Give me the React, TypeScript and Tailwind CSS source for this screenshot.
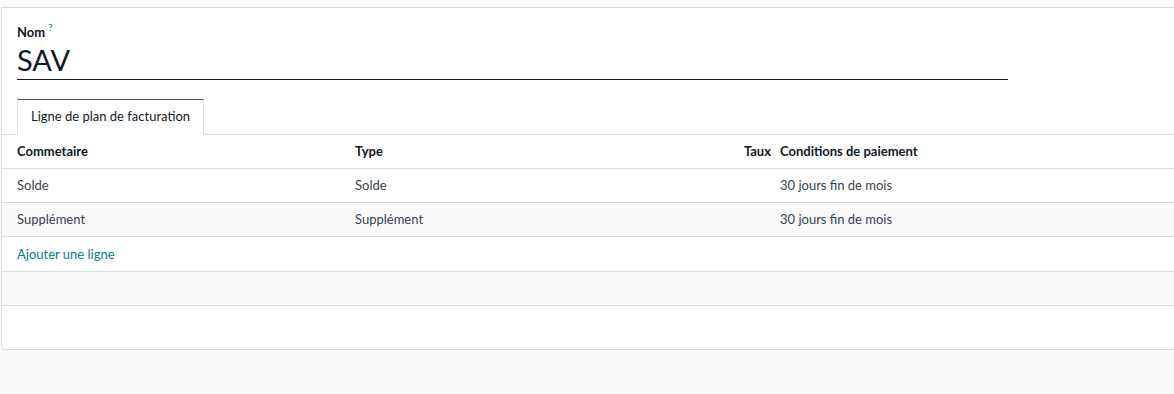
import React from "react";

export default function App() {
  const font = { fontFamily: 'Lato, "Noto Sans", sans-serif' };
  return (
    <div className="w-[1174px] h-[394px] bg-[#f9fafb] overflow-hidden pt-[7px] pl-[1px]" style={font}>
      <div className="w-[1200px] h-[343px] bg-white border border-[#d8dadd] rounded-bl-[4px] text-[13px] text-[#374151]">
        <div className="pl-[15px] pt-[15px]">
          <div className="flex items-start h-[18px] font-bold text-[#111827]">
            Nom<span className="ml-[3px] text-[9px] leading-[10px] text-[#017e84] font-normal">?</span>
          </div>
          <div className="w-[991px] h-[39px] border-b border-[#111827] text-[29px] leading-[36px] text-[#111827] pt-[1px]">SAV</div>
        </div>
        <div className="mt-[19px] flex border-b border-[#d8dadd] pl-[15px] h-[36px]">
          <div className="w-[187px] h-[36px] -mb-[1px] bg-white border border-[#d8dadd] border-t-[#5f4b5a] border-b-white flex items-center justify-center text-[#111827]">
            Ligne de plan de facturation
          </div>
        </div>
        <div className="w-[1200px]">
          <div className="flex h-[34px] items-center border-b border-[#d8dadd] font-bold text-[#111827]">
            <div className="w-[353px] pl-[15px]">Commetaire</div>
            <div className="w-[361px]">Type</div>
            <div className="w-[55px] text-right">Taux</div>
            <div className="pl-[9px]">Conditions de paiement</div>
          </div>
          <div className="flex h-[34px] items-center border-b border-[#d8dadd]">
            <div className="w-[353px] pl-[15px]">Solde</div>
            <div className="w-[361px]">Solde</div>
            <div className="w-[55px]"></div>
            <div className="pl-[9px]">30 jours fin de mois</div>
          </div>
          <div className="flex h-[34px] items-center border-b border-[#d8dadd] bg-[#fafafa]">
            <div className="w-[353px] pl-[15px]">Supplément</div>
            <div className="w-[361px]">Supplément</div>
            <div className="w-[55px]"></div>
            <div className="pl-[9px]">30 jours fin de mois</div>
          </div>
          <div className="flex h-[35px] items-center border-b border-[#d8dadd] pt-[2px]">
            <div className="pl-[15px] text-[#017e84]">Ajouter une ligne</div>
          </div>
          <div className="h-[34px] border-b border-[#d8dadd] bg-[#fafafa]"></div>
        </div>
      </div>
    </div>
  );
}
